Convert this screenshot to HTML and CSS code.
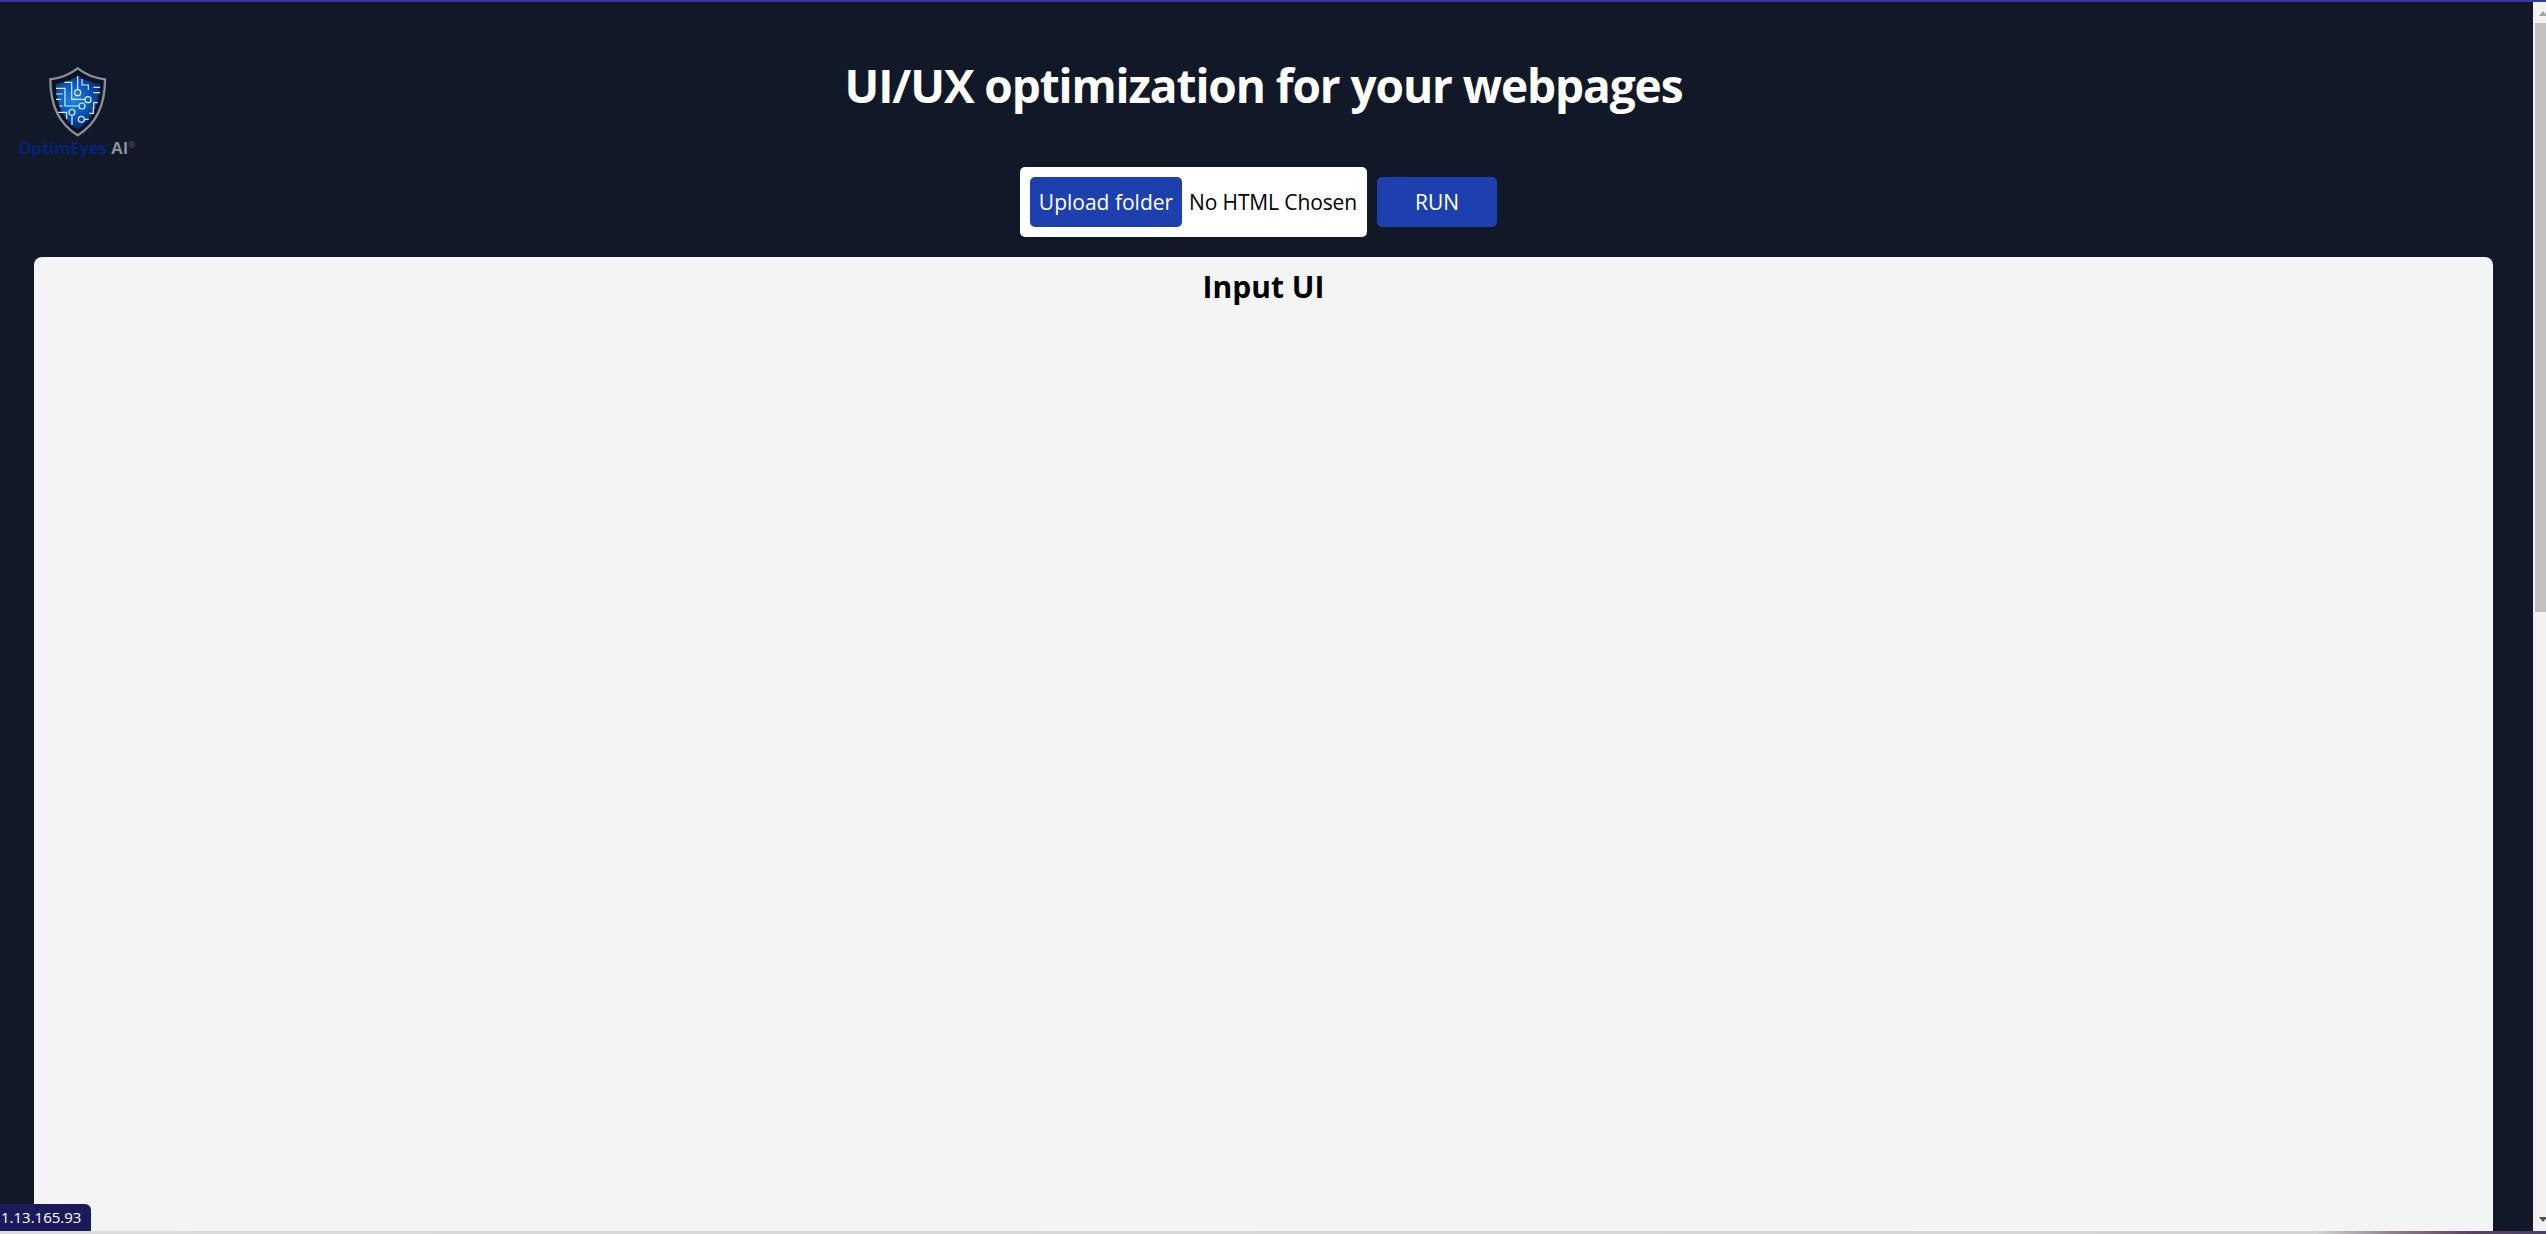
FILE: index.html
```html
<!DOCTYPE html>
<html lang="en">
<head>
<meta charset="utf-8">
<title>OptimEyes AI</title>
<link rel="stylesheet" href="styles.css">
</head>
<body>
<div class="window">
  <div class="page">
    <header class="header">
      <div class="logo">
        <svg class="shield" viewBox="132 192 192 228" width="64" height="76" aria-hidden="true">
          <defs>
            <radialGradient id="glow" gradientUnits="userSpaceOnUse" cx="218" cy="298" r="88">
              <stop offset="0" stop-color="#1f8ae6"/>
              <stop offset="0.45" stop-color="#0c5fc4"/>
              <stop offset="1" stop-color="#062a74"/>
            </radialGradient>
          </defs>
          <path d="M230 205 C206 224 178 234 148 238 C148 310 170 370 230 406 C290 370 312 310 312 238 C282 234 254 224 230 205Z" fill="#0d1322" stroke="#8a8f98" stroke-width="7"/>
          <path d="M230 228 C212 240 190 248 165 252 C166 310 184 360 230 388 C276 360 294 310 297 252 C270 248 248 240 230 228Z" fill="url(#glow)"/>
          <g fill="none" stroke="#d8eafc" stroke-width="3.6">
            <path d="M230 228V268"/>
            <path d="M190 247H212V298H252"/>
            <path d="M165 265H192V318H234"/>
            <path d="M165 282H185M165 298H180M175 318H185"/>
            <path d="M243 237V255H262V270M277 262H297M277 278H297"/>
            <path d="M290 308H278V328M265 340H277V322"/>
            <path d="M172 337H197V358M213 347V375M251 358H263"/>
            <circle cx="230" cy="278" r="9"/>
            <circle cx="261" cy="299" r="9"/>
            <circle cx="243" cy="318" r="9"/>
            <circle cx="213" cy="337" r="9"/>
            <circle cx="241" cy="358" r="9"/>
          </g>
        </svg>
        <div class="brand"><span class="brand-blue">OptimEyes</span> <span class="brand-grey">AI<sup class="brand-mark">®</sup></span></div>
      </div>
      <h1 class="title">UI/UX optimization for your webpages</h1>
      <div class="controls">
        <div class="picker">
          <span class="btn upload">Upload folder</span>
          <span class="file-name">No HTML Chosen</span>
        </div>
        <span class="btn run">RUN</span>
      </div>
    </header>
    <main class="panel">
      <h2 class="panel-title">Input UI</h2>
    </main>
  </div>
  <div class="scrollbar">
    <span class="arrow up"></span>
    <div class="thumb"></div>
    <div class="track"></div>
    <span class="arrow down"></span>
  </div>
  <div class="ip">1.13.165.93</div>
</div>
<div class="bottom-strip"></div>
</body>
</html>
```
FILE: styles.css
```css
* { box-sizing: border-box; }
html, body { margin: 0; height: 100%; overflow: hidden; }
body {
  display: flex;
  flex-direction: column;
  background: #111827;
  font-family: "Open Sans", "Noto Sans", sans-serif;
}
.window {
  position: relative;
  flex: 1;
  min-height: 0;
  display: flex;
  border-top: 2px solid #2f3ba0;
}
.page {
  flex: 1;
  min-width: 0;
  display: flex;
  flex-direction: column;
  padding: 0 40px 0 34px;
}
.header {
  position: relative;
  height: 255px;
  flex: none;
  display: flex;
  flex-direction: column;
  align-items: center;
}
.logo {
  position: absolute;
  left: -13px;
  top: 62px;
  width: 112px;
  display: flex;
  flex-direction: column;
  align-items: center;
}
.shield { display: block; }
.brand {
  margin-top: -2px;
  font-size: 16.5px;
  font-weight: 700;
  line-height: 20px;
  white-space: nowrap;
}
.brand-blue { color: #04227c; }
.brand-grey { color: #8a909b; }
.brand-mark { color: #4a5060; font-size: 9px; line-height: 0; }
.title {
  margin: 53px 0 0;
  color: #fff;
  font-size: 46px;
  line-height: 60px;
  font-weight: 700;
  letter-spacing: -1.1px;
}
.controls {
  margin: 52px 10px 0 0;
  display: flex;
  align-items: center;
  gap: 10px;
  font-size: 21px;
}
.picker {
  display: flex;
  align-items: center;
  height: 70px;
  padding: 0 10px;
  background: #fff;
  border-radius: 5px;
}
.btn {
  display: flex;
  align-items: center;
  justify-content: center;
  height: 50px;
  color: #fff;
  background: #1e40af;
  border-radius: 5px;
}
.upload { width: 152px; }
.run { width: 120px; }
.file-name {
  padding-left: 7px;
  color: #000;
  letter-spacing: -0.12px;
  white-space: nowrap;
}
.panel {
  flex: 1;
  min-height: 0;
  background: #f3f4f6;
  border-radius: 8px 8px 0 0;
  text-align: center;
}
.panel-title {
  margin: 7px 0 0;
  color: #000;
  font-size: 30px;
  line-height: 46px;
  font-weight: 700;
}
.scrollbar {
  flex: none;
  width: 13px;
  display: flex;
  flex-direction: column;
  align-items: flex-end;
  background: #f1f1f1;
}
.arrow { flex: none; width: 100%; height: 21px; position: relative; overflow: hidden; }
.arrow::after {
  content: "";
  position: absolute;
  left: 6px;
  border-left: 4px solid transparent;
  border-right: 4px solid transparent;
}
.arrow.up::after { top: 9px; border-bottom: 5px solid #a3a3a3; }
.arrow.down::after { top: 7px; border-top: 5px solid #505050; }
.thumb { flex: none; width: 11px; height: 589px; background: #c1c1c1; }
.track { flex: 1; }
.ip {
  position: absolute;
  left: 0;
  bottom: 0;
  width: 91px;
  height: 27px;
  background: #1a1a5c;
  color: #fff;
  font-size: 15px;
  line-height: 27px;
  padding-left: 1px;
  border-top-right-radius: 6px;
  white-space: nowrap;
}
.bottom-strip {
  flex: none;
  height: 3px;
  background: linear-gradient(90deg, #dcdcdc 0%, #d4d4d4 91%, #8f7f8c 94%, #5a4560 97%, #4a4068 100%);
}
```
